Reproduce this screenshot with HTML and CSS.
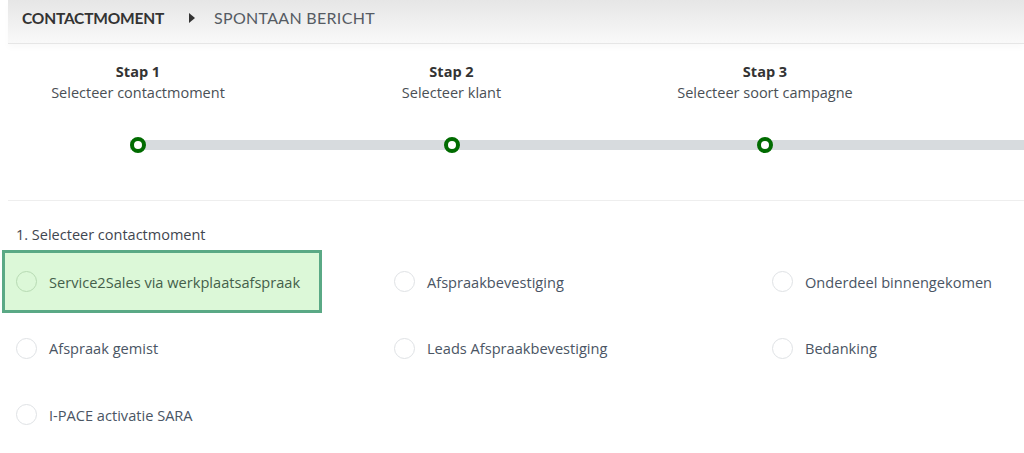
FILE: index.html
```html
<!DOCTYPE html>
<html lang="nl">
<head>
    <meta charset="UTF-8">
    <meta name="viewport" content="width=device-width, initial-scale=1.0">
    <title>Spontaan bericht</title>
    <link rel="stylesheet" href="styles.css">
</head>
<body>
<div class="page">
    <div class="breadcrumb">
        <span class="crumb-main">CONTACTMOMENT</span>
        <span class="crumb-arrow"></span>
        <span class="crumb-sub">SPONTAAN BERICHT</span>
    </div>

    <div class="stepper">
        <div class="steps">
            <div class="step">
                <div class="step-title">Stap 1</div>
                <div class="step-text">Selecteer contactmoment</div>
            </div>
            <div class="step">
                <div class="step-title">Stap 2</div>
                <div class="step-text">Selecteer klant</div>
            </div>
            <div class="step">
                <div class="step-title">Stap 3</div>
                <div class="step-text">Selecteer soort campagne</div>
            </div>
        </div>
        <div class="track">
            <span class="dot"></span>
            <span class="dot"></span>
            <span class="dot"></span>
        </div>
    </div>

    <div class="section">
        <div class="section-title">1. Selecteer contactmoment</div>
        <div class="options">
            <label class="option selected"><span class="radio"></span>Service2Sales via werkplaatsafspraak</label>
            <label class="option"><span class="radio"></span>Afspraakbevestiging</label>
            <label class="option"><span class="radio"></span>Onderdeel binnengekomen</label>
            <label class="option"><span class="radio"></span>Afspraak gemist</label>
            <label class="option"><span class="radio"></span>Leads Afspraakbevestiging</label>
            <label class="option"><span class="radio"></span>Bedanking</label>
            <label class="option"><span class="radio"></span>I-PACE activatie SARA</label>
        </div>
    </div>
</div>
</body>
</html>
```

FILE: styles.css
```css
body {
    font-family: 'Open Sans', sans-serif;
    margin: 0;
    padding: 0;
    background: #ffffff;
    color: #4a5564;
}
.page {
    width: 1024px;
    height: 453px;
    overflow: hidden;
}
.breadcrumb {
    margin-left: 8px;
    height: 44px;
    box-sizing: border-box;
    padding: 0 0 8px 14px;
    display: flex;
    align-items: center;
    background: linear-gradient(#e6e6e6, #f9f9f9);
    border-bottom: 1px solid #e6e6e6;
    box-shadow: 0 4px 6px rgba(0, 0, 0, 0.025);
    font-family: 'Lato', sans-serif;
    font-size: 15.5px;
}
.crumb-main {
    font-weight: bold;
    color: #333333;
    letter-spacing: -0.2px;
}
.crumb-arrow {
    width: 0;
    height: 0;
    margin: 0 19px 0 25px;
    border-top: 5px solid transparent;
    border-bottom: 5px solid transparent;
    border-left: 6px solid #333333;
}
.crumb-sub {
    color: #555b63;
    font-size: 16px;
    letter-spacing: 0.3px;
}
.stepper {
    margin-left: 8px;
    padding-top: 17px;
    padding-bottom: 50px;
    border-bottom: 1px solid #eeeeee;
}
.steps {
    display: flex;
    gap: 113.5px;
    margin-left: 30px;
}
.step {
    width: 200px;
    text-align: center;
    font-size: 14.5px;
    line-height: 21px;
}
.step-title {
    font-weight: bold;
    color: #333333;
}
.step-text {
    color: #4a4f55;
}
.track {
    margin-top: 36.5px;
    margin-left: 122px;
    height: 10px;
    background: #d7dbde;
    display: flex;
    align-items: center;
    gap: 297.5px;
}
.dot {
    width: 8px;
    height: 8px;
    border: 4px solid #006b00;
    border-radius: 50%;
    background: #ffffff;
    flex-shrink: 0;
}
.section {
    padding-top: 23px;
}
.section-title {
    margin-left: 16px;
    font-size: 14.5px;
    line-height: 21px;
    color: #3f4650;
}
.options {
    margin-top: 5.5px;
    margin-left: 2px;
    display: grid;
    grid-template-columns: repeat(3, 378px);
    row-gap: 3.5px;
}
.option {
    width: 320px;
    height: 63px;
    box-sizing: border-box;
    border: 3px solid transparent;
    padding-left: 11px;
    display: flex;
    align-items: center;
    font-size: 14.6px;
    color: #4a5564;
}
.option.selected {
    background: #dcf8d8;
    border-color: #5aa985;
    color: #44604a;
}
.radio {
    width: 19px;
    height: 19px;
    border: 1.5px solid #dfe2e5;
    border-radius: 50%;
    background: #ffffff;
    margin-right: 12px;
    flex-shrink: 0;
}
.option.selected .radio {
    background: #dcf8d8;
    border-color: #b7dab3;
}
```
